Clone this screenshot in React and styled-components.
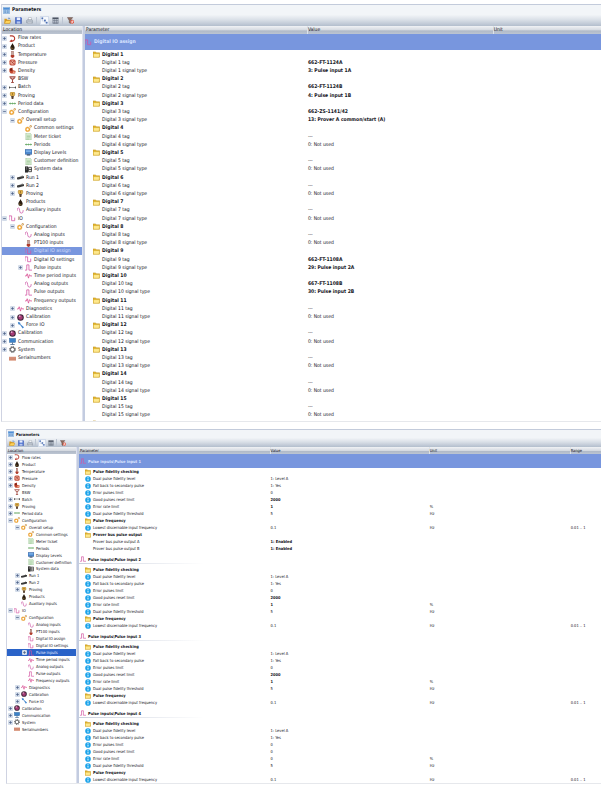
import styled, { createGlobalStyle, css, ThemeProvider } from "styled-components";

const large = {
  font: 5, left: 1, bar: 11, toolbar: 11, head: 8, row: 8, block: 16,
  treeWidth: 80, treeHeight: 328, treePad: 0, icon: 7, iconGap: 2, expGap: 2, indent: 8,
  tool: 9, toolGap: 2, pad: 8, rowIcon: 7, split: 3, bodyHeight: 395, tableHeight: 402,
  selected: "#7896de", selectedText: "#d3dffc", headPad: 0,
};

const small = {
  font: 4, left: 6, bar: 9, toolbar: 9, head: 7, row: 7, block: 14,
  treeWidth: 69, treeHeight: 279, treePad: 1, icon: 6, iconGap: 2, expGap: 1, indent: 7,
  tool: 8, toolGap: 1, pad: 6, rowIcon: 6, split: 3, bodyHeight: 336, tableHeight: 336,
  selected: "#2a63c8", selectedText: "#e6eeff", headPad: 1,
};

const glyphs = {
  window: <><rect x="0" y="1" width="16" height="14" fill="#a9c9ea" stroke="#6c9bd0" /><rect x="1" y="2" width="14" height="4" fill="#4f8fd6" /><path d="M3 9h4M9 9h4M3 12h4M9 12h4" stroke="#4b7fbd" strokeWidth="1.6" /></>,
  open: <><path d="M1 14V4h5l1 2h6v8z" fill="#d99a1c" /><path d="M1 15l3-7h12l-3 7z" fill="#ffd35a" stroke="#b97f12" /><path d="M9 3q4-2 5 2" fill="none" stroke="#3a6fb8" strokeWidth="1.6" /></>,
  save: <><path d="M1 1h13l1 2v12H1z" fill="#4a6fd0" stroke="#2b479e" /><rect x="4" y="1" width="8" height="6" fill="#e8eefc" /><rect x="4" y="10" width="8" height="5" fill="#b8c8ee" /></>,
  print: <><path d="M5 7l1-6h6l1 6z" fill="#fff" stroke="#929aa6" /><path d="M1 8l3-2h9l2 2v5H1z" fill="#b9c1cc" stroke="#7f8997" /><path d="M3 12h10l1 3H4z" fill="#eef1f5" stroke="#8d96a3" /></>,
  treeView: <><path d="M3 3v6h6M9 9v4h4" fill="none" stroke="#8298bf" strokeDasharray="2 1" /><rect x="1" y="1" width="4" height="4" fill="#4d70b4" /><rect x="7" y="6" width="4" height="4" fill="#4d70b4" /><rect x="11" y="11" width="4" height="4" fill="#4d70b4" /></>,
  grid: <><rect x="1" y="1" width="14" height="4" fill="#4d5564" /><path d="M2 5v10h12V5M6 5v10M10 5v10M2 8h12M2 12h12" fill="none" stroke="#6a7383" strokeWidth="1.4" /></>,
  filter: <><path d="M1 1h12L8 8v7l-3-2V8z" fill="#8e6a5c" stroke="#5d4a48" /><circle cx="12" cy="11" r="3.6" fill="#fff" stroke="#e0452e" strokeWidth="2" /><path d="M10 9l4 4" stroke="#e0452e" strokeWidth="1.6" /></>,
  folder: <><path d="M0 14V2h6l2 2h7v10z" fill="#e5b52d" stroke="#b98d1a" /><path d="M1 14V6h14l-1 8z" fill="#ffe98d" stroke="#c9a02a" strokeWidth=".8" /></>,
  info: <><circle cx="8" cy="8" r="7.5" fill="#1ba3ea" /><path d="M8 7v5" stroke="#fff" strokeWidth="2.4" /><circle cx="8" cy="4.3" r="1.4" fill="#fff" /></>,
  flow: <path d="M2 2h5a6 6 0 0 1 0 12H4M7 11l-4 3 4 2" fill="none" stroke="#b5382c" strokeWidth="2.4" />,
  drop: <><path d="M8 0c1 4 5 6 5 11a5 5 0 0 1-10 0C3 6 7 4 8 0z" fill="#2a1d10" /><path d="M6 10v3h4" fill="none" stroke="#8f6f37" strokeWidth="1.6" /></>,
  thermo: <><rect x="6" y="0" width="4" height="10" fill="#c9a59d" stroke="#8e5248" /><path d="M4 9h8v3q-1 4-4 4t-4-4z" fill="#b03a2a" /></>,
  gauge: <><rect x="1" y="1" width="14" height="14" rx="4" fill="#c2503f" /><circle cx="8" cy="8" r="5" fill="#e7a08e" /><path d="M5 5l6 6M11 5l-4 4" stroke="#a03a2e" strokeWidth="1.6" /></>,
  density: <><path d="M1 4l7-3v6l7 2-1 6H4l-3-4z" fill="#c2452c" /><circle cx="5" cy="6" r="3" fill="#7f2419" /><circle cx="11" cy="12" r="2.5" fill="#f0a287" /></>,
  bsw: <path d="M1 2h14M3 4l5 4 5-4M8 8v7M5 15h6" fill="none" stroke="#a34c43" strokeWidth="2.4" />,
  batch: <><path d="M3 8h10" stroke="#666" strokeWidth="1.6" /><path d="M0 5l4 3-4 3zM16 5l-4 3 4 3z" fill="#444" /></>,
  medal: <><rect x="3" y="0" width="10" height="9" rx="3" fill="#e8b84b" stroke="#96702a" strokeWidth="1.2" /><circle cx="8" cy="4.5" r="1.6" fill="#7d5520" /><path d="M5 9h6l-1 7H6z" fill="#5a4230" /></>,
  period: <path d="M0 8h16M3 6v4M8 6v4M13 6v4" stroke="#65a863" strokeWidth="1.8" />,
  gears: <><circle cx="6" cy="10" r="4" fill="none" stroke="#efa32f" strokeWidth="3" /><circle cx="6" cy="10" r="5.6" fill="none" stroke="#dc8d1d" strokeDasharray="2 1.5" /><circle cx="13" cy="3" r="2" fill="none" stroke="#c68a35" strokeWidth="1.8" /></>,
  page: <><path d="M2 0h9l3 3v13H2z" fill="#e4f3df" stroke="#74ab6b" /><path d="M4 5h8M4 8h8M4 11h8M4 14h6" stroke="#6fab68" /></>,
  display: <><rect x="0" y="1" width="16" height="11" fill="#4b86cb" stroke="#3a5f96" /><rect x="2" y="3" width="12" height="4" fill="#7db1e8" /><rect x="4" y="12" width="8" height="3" fill="#39506f" /></>,
  system: <><rect x="0" y="1" width="7" height="14" fill="#2d2d2d" /><path d="M8 3h7v10H8zM8 8h7" fill="#ddd" stroke="#2d2d2d" strokeWidth="1.8" /><path d="M2 4h3M2 7h3" stroke="#ddd" /></>,
  run: <><path d="M0 8l11-3h5v4l-10 3H0z" fill="#3a3a3a" /><path d="M1 12h4M12 5v-2" stroke="#777" strokeWidth="1.6" /></>,
  sine: <path d="M0 9q0-7 3-7t3 6 4 6 4-5V7" fill="none" stroke="#cf5caa" strokeWidth="1.8" />,
  square: <path d="M0 12V2h6v11h7V6" fill="none" stroke="#d457a3" strokeWidth="1.8" />,
  pulse: <path d="M0 14h4V2h5v12h7" fill="none" stroke="#d457a3" strokeWidth="1.8" />,
  beat: <path d="M0 9h3l2-5 3 10 2-8 2 3h4" fill="none" stroke="#d84c91" strokeWidth="1.8" />,
  ball: <><circle cx="8" cy="8" r="7.5" fill="#3d2438" /><circle cx="8" cy="8" r="5" fill="#a63c76" /><circle cx="6" cy="5" r="2" fill="#e3a7c8" /></>,
  wrench: <path d="M2 0l1 5 4 1 6 9 3-3-8-7-1-4z" fill="#3e84cd" />,
  comm: <><rect x="1" y="1" width="14" height="9" fill="#3c83c9" stroke="#275b90" /><path d="M8 10v5M3 15h10" stroke="#4e6f94" strokeWidth="2" /></>,
  cog: <><circle cx="8" cy="8" r="4.8" fill="none" stroke="#3c3c3c" strokeWidth="2" /><circle cx="8" cy="8" r="6.8" fill="none" stroke="#3c3c3c" strokeWidth="2" strokeDasharray="2.7 2.6" /></>,
  serial: <><rect x="0" y="4" width="16" height="9" fill="#dd9b83" /><path d="M0 7h16M0 10h16" stroke="#bd6b52" /></>,
};

const Glyph = ({ name }) => (
  <Svg viewBox="0 0 16 16" aria-hidden="true">{glyphs[name]}</Svg>
);

// [level, icon, label, expander]
const tree = [
  [0, "flow", "Flow rates", "+"],
  [0, "drop", "Product", "+"],
  [0, "thermo", "Temperature", "+"],
  [0, "gauge", "Pressure", "+"],
  [0, "density", "Density", "+"],
  [0, "bsw", "BSW"],
  [0, "batch", "Batch", "+"],
  [0, "medal", "Proving", "+"],
  [0, "period", "Period data", "+"],
  [0, "gears", "Configuration", "-"],
  [1, "gears", "Overall setup", "-"],
  [2, "gears", "Common settings"],
  [2, "page", "Meter ticket"],
  [2, "period", "Periods"],
  [2, "display", "Display Levels"],
  [2, "page", "Customer definition"],
  [2, "system", "System data"],
  [1, "run", "Run 1", "+"],
  [1, "run", "Run 2", "+"],
  [1, "medal", "Proving", "+"],
  [1, "drop", "Products"],
  [1, "sine", "Auxiliary inputs"],
  [0, "square", "IO", "-"],
  [1, "gears", "Configuration", "-"],
  [2, "sine", "Analog inputs"],
  [2, "thermo", "PT100 inputs"],
  [2, "square", "Digital IO assign"],
  [2, "square", "Digital IO settings"],
  [2, "pulse", "Pulse inputs", "+"],
  [2, "beat", "Time period inputs"],
  [2, "sine", "Analog outputs"],
  [2, "pulse", "Pulse outputs"],
  [2, "beat", "Frequency outputs"],
  [1, "beat", "Diagnostics", "+"],
  [1, "ball", "Calibration", "+"],
  [1, "wrench", "Force IO", "+"],
  [0, "ball", "Calibration", "+"],
  [0, "comm", "Communication", "+"],
  [0, "cog", "System", "+"],
  [0, "serial", "Serialnumbers"],
];

const assigned = {
  1: ["662-FT-1124A", "3: Pulse input 1A"],
  2: ["662-FT-1124B", "4: Pulse input 1B"],
  3: ["662-ZS-1141/42", "13: Prover A common/start (A)"],
  9: ["662-FT-1108A", "29: Pulse input 2A"],
  10: ["667-FT-1108B", "30: Pulse input 2B"],
};

const digitalRows = [{ type: "block", label: "Digital IO assign", icon: "square", active: true }];
for (let n = 1; n <= 15; n++) {
  const [tag, signal] = assigned[n] || ["---", "0: Not used"];
  const bold = n in assigned;
  digitalRows.push(
    { type: "group", label: `Digital ${n}` },
    { label: `Digital ${n} tag`, value: tag, bold },
    { label: `Digital ${n} signal type`, value: signal, bold }
  );
}
digitalRows.push({ type: "group", label: "" });

const pulseRows = [1, 2, 3, 4].flatMap((n) => [
  { type: "block", label: `Pulse inputs\\Pulse input ${n}`, icon: "pulse", active: n === 1 },
  { type: "group", label: "Pulse fidelity checking" },
  { icon: "info", label: "Dual pulse fidelity level", value: "1: Level A" },
  { icon: "info", label: "Fall back to secondary pulse", value: "1: Yes" },
  { icon: "info", label: "Error pulses limit", value: "0" },
  { icon: "info", label: "Good pulses reset limit", value: n < 4 ? "2000" : "0", bold: n < 4 },
  { icon: "info", label: "Error rate limit", value: n < 4 ? "1" : "0", bold: n < 4, unit: "%" },
  { icon: "info", label: "Dual pulse fidelity threshold", value: "5", unit: "Hz" },
  { type: "group", label: "Pulse frequency" },
  { icon: "info", label: "Lowest discernable input frequency", value: "0.1", unit: "Hz", range: "0.01 .. 1" },
  ...(n === 1
    ? [
        { type: "group", label: "Prover bus pulse output" },
        { label: "Prover bus pulse output A", value: "1: Enabled", bold: true },
        { label: "Prover bus pulse output B", value: "1: Enabled", bold: true },
      ]
    : []),
]);

const tools = [
  ["open", "Open"],
  ["save", "Save"],
  ["print", "Print"],
  null,
  ["treeView", "Tree view"],
  ["grid", "Grid view"],
  null,
  ["filter", "Clear filter"],
];

const Parameters = ({ theme, selected, columns, rows }) => (
  <ThemeProvider theme={theme}>
    <Panel>
      <TitleBar>
        <IconBox><Glyph name="window" /></IconBox>
        Parameters
      </TitleBar>
      <Toolbar>
        {tools.map((tool, i) =>
          tool ? (
            <ToolButton key={i} type="button" aria-label={tool[1]} $on={tool[0] === "treeView"}>
              <IconBox><Glyph name={tool[0]} /></IconBox>
            </ToolButton>
          ) : (
            <Divider key={i} />
          )
        )}
      </Toolbar>
      <Body>
        <Side>
          <SideHead>Location</SideHead>
          <Tree>
            {tree.map(([level, icon, label, sign], i) => (
              <TreeRow key={i} $level={level} $selected={label === selected}>
                {sign ? (
                  <Expander type="button" aria-label={`Toggle ${label}`}>
                    <svg viewBox="0 0 9 9">
                      <path d={sign === "+" ? "M2 4.5h5M4.5 2v5" : "M2 4.5h5"} stroke="#4a5f86" strokeWidth="1.3" />
                    </svg>
                  </Expander>
                ) : (
                  <Spacer />
                )}
                <IconBox><Glyph name={icon} /></IconBox>
                <span>{label}</span>
              </TreeRow>
            ))}
          </Tree>
        </Side>
        <Splitter />
        <Content>
          <Table>
            <colgroup>
              {columns.map(([name, width]) => <Col key={name} $width={width} />)}
            </colgroup>
            <thead>
              <tr>{columns.map(([name]) => <Th key={name} scope="col">{name}</Th>)}</tr>
            </thead>
            <tbody>
              {rows.map((row, i) =>
                row.type === "block" ? (
                  <tr key={i}>
                    <BlockCell colSpan={columns.length} $active={row.active}>
                      <BlockTitle>
                        <IconBox><Glyph name={row.icon} /></IconBox>
                        {row.label}
                      </BlockTitle>
                    </BlockCell>
                  </tr>
                ) : (
                  <tr key={i}>
                    <Td>
                      <Name $bold={row.type === "group"}>
                        <RowIcon>
                          {(row.type === "group" || row.icon) && (
                            <Glyph name={row.icon || "folder"} />
                          )}
                        </RowIcon>
                        {row.label}
                      </Name>
                    </Td>
                    <Td $bold={row.bold}>{row.value}</Td>
                    <Td>{row.unit}</Td>
                    {columns.length > 3 && <Td>{row.range}</Td>}
                  </tr>
                )
              )}
            </tbody>
          </Table>
        </Content>
      </Body>
    </Panel>
  </ThemeProvider>
);

const App = () => (
  <>
    <GlobalStyle />
    <Page>
      <Parameters
        theme={large}
        selected="Digital IO assign"
        columns={[["Parameter", "43%"], ["Value", "36%"], ["Unit", "21%"]]}
        rows={digitalRows}
      />
      <Parameters
        theme={small}
        selected="Pulse inputs"
        columns={[["Parameter", "36.5%"], ["Value", "30.5%"], ["Unit", "27%"], ["Range", "6%"]]}
        rows={pulseRows}
      />
    </Page>
  </>
);

export default App;

const px = (key) => ({ theme }) => `${theme[key]}px`;

const GlobalStyle = createGlobalStyle`
  * {
    box-sizing: border-box;
  }
  body {
    margin: 0;
    background: #fff;
    font-family: "DejaVu Sans Condensed", "DejaVu Sans", sans-serif;
    color: #14141c;
    text-rendering: geometricPrecision;
  }
  button {
    margin: 0;
    padding: 0;
    border: 0;
    background: none;
  }
  svg {
    display: block;
  }
`;

const Page = styled.main`
  display: flex;
  flex-direction: column;
  gap: 7px;
  padding-top: 4px;
  overflow: hidden;
`;

const Panel = styled.section`
  margin-left: ${px("left")};
  border-left: 1px solid #cfd3e2;
  border-bottom: 1px solid #e6e8ec;
  font-size: ${px("font")};
  line-height: ${px("row")};
  white-space: nowrap;
`;

const Svg = styled.svg`
  width: 100%;
  height: 100%;
`;

const IconBox = styled.span`
  flex: none;
  width: ${px("icon")};
  height: ${px("icon")};
`;

const TitleBar = styled.header`
  display: flex;
  align-items: center;
  gap: 2px;
  height: ${px("bar")};
  padding-left: 1px;
  border-top: 1px solid #c3cbdb;
  background: #f2f5f8;
  font-weight: bold;
`;

const Toolbar = styled.div`
  display: flex;
  align-items: center;
  gap: ${px("toolGap")};
  height: ${px("toolbar")};
  padding-left: 1px;
  background: linear-gradient(#f1f4f7, #d9dfe7 45%, #b3becd);
`;

const ToolButton = styled.button`
  display: flex;
  align-items: center;
  justify-content: center;
  width: ${px("tool")};
  height: ${px("tool")};
  ${({ $on }) => $on && css`
    background: #f6f9fd;
    box-shadow: inset 0 0 0 1px #d3dceb;
  `}
`;

const Divider = styled.span`
  width: 1px;
  height: ${px("row")};
  margin: 0 1px 0 0;
  background: #bcc5d2;
`;

const Body = styled.div`
  display: flex;
  height: ${px("bodyHeight")};
  overflow: hidden;
`;

const headFill = css`
  height: ${px("head")};
  background: linear-gradient(#f0f2f5, #d5dae1 50%, #b0b9c7 60%, #bcc5d2);
  line-height: ${px("head")};
  font-weight: normal;
  text-align: left;
`;

const Side = styled.aside`
  flex: none;
  width: ${px("treeWidth")};
`;

const SideHead = styled.div`
  ${headFill}
  padding-left: 1px;
`;

const Tree = styled.ul`
  display: flex;
  flex-direction: column;
  height: ${px("treeHeight")};
  margin: 0;
  padding: 0;
  list-style: none;
`;

const TreeRow = styled.li`
  flex: 1;
  display: flex;
  align-items: center;
  min-height: 0;
  padding-left: ${({ theme, $level }) => theme.treePad + $level * theme.indent}px;
  ${({ theme, $selected }) => $selected && css`
    background: ${theme.selected};
    color: ${theme.selectedText};
  `}
  span:last-child {
    margin-left: ${px("iconGap")};
  }
`;

const Expander = styled.button`
  width: 5px;
  height: 5px;
  margin-right: ${px("expGap")};
  background: #d3dce9;
  border-radius: 1px;
`;

const Spacer = styled.i`
  width: 5px;
  margin-right: ${px("expGap")};
`;

const Splitter = styled.div`
  flex: none;
  width: ${px("split")};
  border-left: 1px solid #dde1ee;
  background: #c3cce0;
`;

const Content = styled.div`
  flex: 1;
  min-width: 0;
`;

const Table = styled.table`
  width: 100%;
  height: ${px("tableHeight")};
  table-layout: fixed;
  border-collapse: collapse;
  font-size: ${px("font")};
`;

const Col = styled.col`
  width: ${({ $width }) => $width};
`;

const Th = styled.th`
  ${headFill}
  padding: 0 0 0 1px;
  & + & {
    box-shadow: inset 1px 0 #dde2e9;
  }
`;

const Td = styled.td`
  height: ${px("row")};
  padding: 0 0 0 1px;
  line-height: ${px("row")};
  font-weight: ${({ $bold }) => ($bold ? "bold" : "normal")};
  &:first-child {
    padding-left: ${px("pad")};
  }
`;

const Name = styled.div`
  display: flex;
  align-items: center;
  gap: 2px;
  height: ${px("row")};
  font-weight: ${({ $bold }) => ($bold ? "bold" : "normal")};
`;

const RowIcon = styled.span`
  width: ${px("rowIcon")};
  height: ${px("icon")};
`;

const BlockCell = styled.td`
  height: ${px("block")};
  padding: 0 0 0 ${px("headPad")};
  background: linear-gradient(90deg, #c9cfdc, #fff) left bottom 2px / 24% 1px no-repeat;
  ${({ $active }) => $active && css`
    background: #7896de;
    color: #dbe5ff;
  `}
`;

const BlockTitle = styled.div`
  display: flex;
  align-items: center;
  gap: 2px;
  font-weight: bold;
`;
